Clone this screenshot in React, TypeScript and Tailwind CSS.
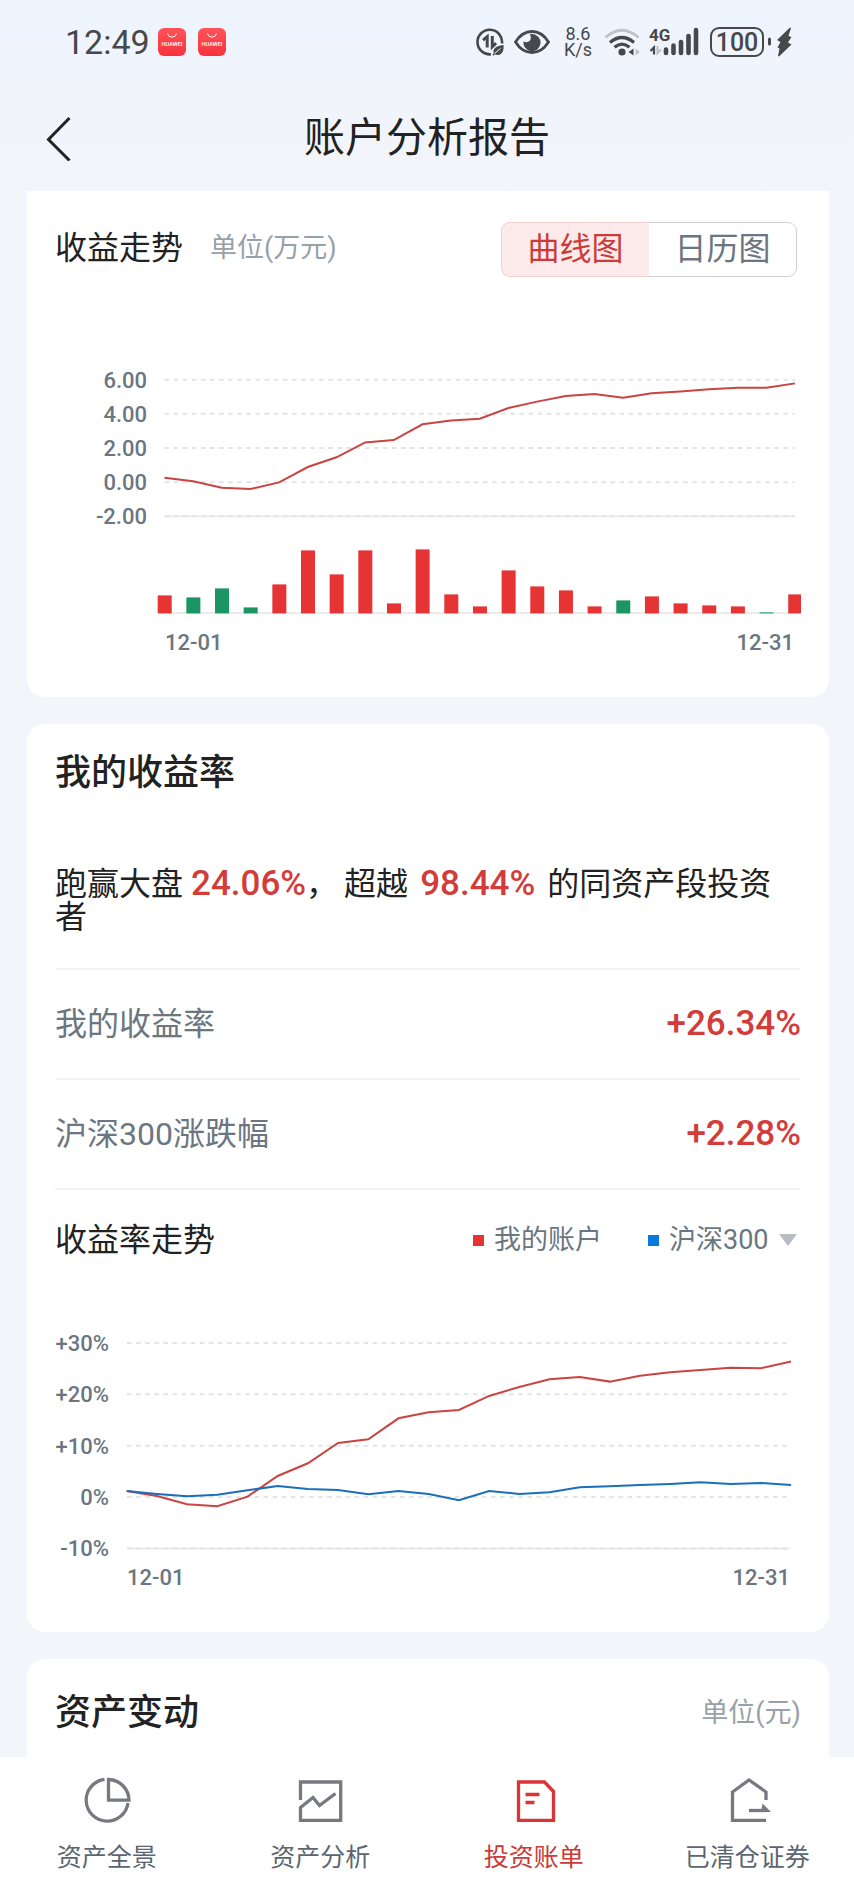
import { useState } from 'react';

const profit = [
  0.26, 0.05, -0.32, -0.4, -0.01, 0.89, 1.46, 2.33, 2.47, 3.39, 3.62, 3.72,
  4.35, 4.72, 5.05, 5.17, 4.95, 5.21, 5.32, 5.44, 5.54, 5.54, 5.79,
];

// daily bars, negative = loss
const daily = [
  18, -16, -25, -6, 29, 63, 39, 63, 10, 64, 19, 7, 43, 27, 23, 7, -13, 17, 10,
  8, 7, -1, 19,
];

const accountRate = [
  1.13, 0.16, -1.46, -1.85, 0.03, 4.05, 6.52, 10.47, 11.19, 15.27, 16.44,
  16.89, 19.62, 21.37, 22.86, 23.31, 22.41, 23.57, 24.22, 24.68, 25.13, 25,
  26.34,
];

const indexRate = [
  1.13, 0.55, 0.1, 0.42, 1.26, 2.11, 1.52, 1.33, 0.49, 1.13, 0.55, -0.68, 1.13,
  0.55, 0.88, 1.85, 2.04, 2.3, 2.5, 2.82, 2.5, 2.69, 2.28,
];

const toPoints = (data: number[], left: number, step: number, zero: number, unit: number) =>
  data.map((v, i) => `${left + i * step},${zero - v * unit}`).join(' ');

type GridProps = {
  labels: string[];
  left: number;
  right: number;
  labelRight: number;
  top: number;
  step: number;
};

const Grid = ({ labels, left, right, labelRight, top, step }: GridProps) => (
  <g>
    {labels.map((label, i) => {
      const y = top + i * step;
      const last = i === labels.length - 1;
      return (
        <g key={label}>
          {last && <line x1={left} x2={right} y1={y} y2={y} stroke="#ececec" strokeWidth="2" />}
          <line
            x1={left}
            x2={right}
            y1={y}
            y2={y}
            stroke="#e4e4e4"
            strokeWidth="2"
            strokeDasharray="4.55 4.55"
          />
          <text x={labelRight} y={y + 8} textAnchor="end">
            {label}
          </text>
        </g>
      );
    })}
  </g>
);

const chartText = 'block w-full h-auto fill-[#6b7680] text-[22px] font-medium';

const ProfitChart = () => (
  <svg viewBox="0 0 746 392" className={chartText} role="img" aria-label="收益走势">
    <Grid
      labels={['6.00', '4.00', '2.00', '0.00', '-2.00']}
      left={109.5}
      right={740}
      labelRight={92}
      top={102.7}
      step={34.15}
    />
    <line x1="104" x2="746" y1="336" y2="336" stroke="#ebebeb" strokeWidth="2" />
    {daily.map((v, i) => (
      <rect
        key={i}
        x={102.7 + i * 28.66}
        y={336.4 - Math.abs(v)}
        width="14"
        height={Math.abs(v)}
        fill={v > 0 ? '#e63434' : '#1a9664'}
      />
    ))}
    <polyline
      points={toPoints(profit, 109.5, 28.66, 205.2, 17.07)}
      fill="none"
      stroke="#c94442"
      strokeWidth="2"
    />
    <text x="110" y="373">12-01</text>
    <text x="739" y="373" textAnchor="end">12-31</text>
  </svg>
);

const RateChart = () => (
  <svg viewBox="0 0 746 314" className={chartText} role="img" aria-label="收益率走势">
    <Grid
      labels={['+30%', '+20%', '+10%', '0%', '-10%']}
      left={72}
      right={735}
      labelRight={54}
      top={53}
      step={51.35}
    />
    <polyline
      points={toPoints(accountRate, 71.7, 30.2, 206.8, 5.14)}
      fill="none"
      stroke="#c94442"
      strokeWidth="2"
    />
    <polyline
      points={toPoints(indexRate, 71.7, 30.2, 206.8, 5.14)}
      fill="none"
      stroke="#1b6fba"
      strokeWidth="2"
    />
    <text x="72" y="295">12-01</text>
    <text x="735" y="295" textAnchor="end">12-31</text>
  </svg>
);

const AppBadge = () => (
  <svg width="28" height="28" viewBox="0 0 28 28">
    <defs>
      <linearGradient id="badge" x1="0" y1="0" x2="0" y2="1">
        <stop offset="0" stopColor="#ff5358" />
        <stop offset="1" stopColor="#f5333f" />
      </linearGradient>
    </defs>
    <rect width="28" height="28" rx="6" fill="url(#badge)" />
    <path d="M9.5 5.5a4.6 4.6 0 0 0 9 0" fill="none" stroke="#fff" strokeWidth="1" />
    <text x="14" y="18" textAnchor="middle" fontSize="5.6" fontWeight="500" fill="#fff">
      HUAWEI
    </text>
  </svg>
);

const StatusBar = () => (
  <div className="flex h-[84px] shrink-0 items-center justify-between pl-[65px] pr-[60px] text-[#47484b]">
    <div className="flex items-center">
      <span className="w-[93px] text-[34px] leading-10">12:49</span>
      <div className="flex gap-3">
        <AppBadge />
        <AppBadge />
      </div>
    </div>
    <div className="flex items-center">
      {/* data saver */}
      <svg width="28" height="28" viewBox="0 0 28 28" fill="none" stroke="currentColor">
        <path d="M26 15.5A12.3 12.3 0 1 0 15 26.3" strokeWidth="2.6" />
        <path d="M7 12.2l4.200-3.500V19.500M16.300 8v10.800l3.800-3.600" strokeWidth="3" />
        <path
          d="M27.5 17c.6 6-1.5 10-6 10-1.2 0-2-.3-2.6-.8l-1.4 1.5-1-1 1.3-1.6c-1.7-4.5 3-7.6 9.7-8.1z"
          fill="currentColor"
          stroke="none"
        />
        <path d="M18.5 25.5l6-5" stroke="#f0f5fd" strokeWidth="1" />
      </svg>
      {/* eye comfort */}
      <svg className="ml-[10px]" width="36" height="26" viewBox="0 0 36 26">
        <path
          d="M1.5 13C6 5.8 11.5 2.5 18 2.5S30 5.800 34.500 13C30 20.200 24.500 23.500 18 23.500S6 20.200 1.500 13z"
          fill="none"
          stroke="currentColor"
          strokeWidth="2.8"
        />
        <path
          d="M18 5a8.600 8.600 0 1 1-8.500 7.200c2 1.600 5.500 1.200 6.800-1.200 1-2 .6-4.300-.6-5.700A9 9 0 0 1 18 5z"
          fill="currentColor"
        />
      </svg>
      <span className="ml-3 flex w-8 flex-col items-center text-[18px] leading-4">
        <span>8.6</span>
        <span>K/s</span>
      </span>
      {/* wifi */}
      <svg className="ml-[10px]" width="37" height="28" viewBox="0 0 37 28" fill="none" stroke="currentColor">
        <path d="M1.5 9.5Q18 -5 34.5 9.5" stroke="#bfc3c9" strokeWidth="2.8" />
        <path d="M6 14.5q12-10 24 0" strokeWidth="3.2" />
        <path d="M10.5 19.3q7.5-6.5 15 0" strokeWidth="3.2" />
        <circle cx="18" cy="24" r="3.6" fill="currentColor" stroke="none" />
        <path d="M29.5 20.5v7l-5-3.5z" fill="currentColor" stroke="none" />
        <path d="M31.5 20.5v7l4.500-3.500z" fill="#bfc3c9" stroke="none" />
      </svg>
      {/* mobile signal */}
      <svg
        className="ml-2 overflow-visible"
        width="52"
        height="30"
        viewBox="0 0 52 30"
        fill="none"
        stroke="currentColor"
      >
        <text x="0" y="14" fontSize="17" fontWeight="700" fill="currentColor" stroke="none">
          4G
        </text>
        <path d="M5 27.500v-7l-3.500 3.500" strokeWidth="2.2" />
        <path d="M8.500 19v7l3.500-3.500" stroke="#bfc3c9" strokeWidth="2.2" />
        <path
          d="M17 22.500v3.500M24.500 18.500v7.500M32 15v11M39.500 9v17M47 3v23"
          strokeWidth="4.6"
          strokeLinecap="round"
        />
      </svg>
      <div className="ml-[9px] flex h-[30px] w-[54px] items-center justify-center rounded-[9px] border-2 border-current text-[25px] font-medium leading-none">
        100
      </div>
      {/* battery tip and charging bolt */}
      <svg className="ml-1" width="26" height="30" viewBox="0 0 26 30" fill="currentColor">
        <rect x="0" y="10.5" width="3" height="8" rx="1.5" />
        <path d="M22 .5L9 13l3.500 2-3 5.500 2 1L10 29l1 .5L23.500 17.500l-3.500-2 3.500-5.500-3-1L23 1z" />
      </svg>
    </div>
  </div>
);

const tabs = [
  {
    label: '资产全景',
    icon: (
      <>
        <path d="M21.5 3.300A21 21 0 1 0 45 27" />
        <path d="M25.5 3.5v20.700h20.500A21 21 0 0 0 25.500 3.500z" />
      </>
    ),
  },
  {
    label: '资产分析',
    icon: <path d="M4.5 24V6h40.200v38.300H4.500V31.500L17 21.500l6.500 8L39.500 17.500" />,
  },
  {
    label: '投资账单',
    icon: (
      <>
        <path d="M8.5 6h26l9 9.500v28.800h-35z" />
        <path d="M15.500 18.500h14M15.500 26.500h9" />
      </>
    ),
  },
  {
    label: '已清仓证券',
    icon: (
      <>
        <path d="M43 24v-8L26 4 9.500 16v28.300H43" />
        <path d="M26 34.500h18" />
        <path d="M39.500 27.500l8.500 8.500H38z" fill="currentColor" stroke="none" />
      </>
    ),
  },
];

const TabBar = () => (
  <nav className="grid h-[133px] shrink-0 grid-cols-4 bg-white">
    {tabs.map((tab) => {
      const active = tab.label === '投资账单';
      return (
        <a
          key={tab.label}
          href="#"
          aria-current={active ? 'page' : undefined}
          className={`flex flex-col items-center pt-[19px] ${active ? 'text-[#dd3535]' : 'text-[#777881]'}`}
        >
          <svg width="48" height="48" viewBox="0 0 48 48" fill="none" stroke="currentColor" strokeWidth="3.3">
            {tab.icon}
          </svg>
          <span
            className={`mt-[18px] text-[25px] leading-8 ${active ? 'text-[#c93a38]' : 'text-[#5b6670]'}`}
          >
            {tab.label}
          </span>
        </a>
      );
    })}
  </nav>
);

const App = () => {
  const [view, setView] = useState('曲线图');

  return (
    <div className="flex h-screen flex-col bg-[#f4f5fa] bg-[linear-gradient(#edf5fe,#f1f4fc_80px,#f4f5fa_190px)] font-[Roboto,'Noto_Sans_CJK_SC',sans-serif] text-[#222]">
      <StatusBar />

      <header className="grid h-[107px] shrink-0 grid-cols-[1fr_auto_1fr] items-center px-11">
        <button type="button" aria-label="返回" className="justify-self-start">
          <svg width="28" height="46" viewBox="0 0 28 46" fill="none" stroke="#222" strokeWidth="3">
            <path d="M25.5 3l-21 21.500 21 21" />
          </svg>
        </button>
        <h1 className="text-[41px] leading-[60px]">账户分析报告</h1>
      </header>

      <main className="flex min-h-0 flex-1 flex-col gap-[27px] overflow-y-auto pl-[27px] pr-[25px] [scrollbar-width:none]">
        <section className="shrink-0 rounded-b-[18px] bg-white px-7 pb-7 pt-[31px]">
          <div className="flex h-[55px] items-center justify-between pr-1">
            <div className="flex items-center pb-1">
              <h2 className="text-[32px] leading-10">收益走势</h2>
              <span className="ml-[27px] text-[27px] leading-10 text-[#98a0a8]">单位(万元)</span>
            </div>
            <div className="flex h-full w-[296px] text-[32px] leading-10">
              {['曲线图', '日历图'].map((name) => (
                <button
                  key={name}
                  type="button"
                  aria-pressed={view === name}
                  onClick={() => setView(name)}
                  className={`flex flex-1 items-center justify-center border pb-0.5 first:rounded-l-[9px] first:border-r-0 last:rounded-r-[9px] last:border-l-0 ${
                    view === name
                      ? 'border-[#f0d0d0] bg-[#fdebeb] text-[#cc3b39]'
                      : 'border-[#cfd2d5] text-[#6b7680]'
                  }`}
                >
                  {name}
                </button>
              ))}
            </div>
          </div>
          <ProfitChart />
        </section>

        <section className="shrink-0 rounded-[18px] bg-white px-7 pb-7 pt-[31px]">
          <h2 className="text-[36px] font-medium leading-9">我的收益率</h2>
          <p className="mb-[34px] mt-[77px] text-[32px] leading-[33px]">
            跑赢大盘
            <b className="ml-2 text-[35px] font-medium leading-7 text-[#d23c3a]">24.06%</b>
            ，<span className="mx-1.5">超越</span>
            <b className="mx-1.5 text-[35px] font-medium leading-7 text-[#d23c3a]">98.44%</b>
            <span className="ml-1.5">的同资产段投资者</span>
          </p>
          <dl>
            {[
              ['我的收益率', '+26.34%'],
              ['沪深300涨跌幅', '+2.28%'],
            ].map(([name, value]) => (
              <div
                key={name}
                className="flex h-[110px] items-center justify-between border-t-2 border-[#f2f2f2]"
              >
                <dt className="text-[32px] leading-10 text-[#6b7680]">{name}</dt>
                <dd className="text-[35px] font-medium leading-10 text-[#d23c3a]">{value}</dd>
              </div>
            ))}
          </dl>
          <div className="flex h-[102px] items-center justify-between border-t-2 border-[#f2f2f2] pr-1">
            <h3 className="text-[32px] leading-10">收益率走势</h3>
            <div className="flex items-center text-[27px] leading-10 text-[#6b7680]">
              <i className="mr-[10px] size-[11px] bg-[#e63434]" />
              我的账户
              <i className="ml-[46px] mr-[10px] size-[11px] bg-[#0a78dc]" />
              <select aria-label="对比指数" className="appearance-none bg-transparent">
                <option>沪深300</option>
              </select>
              <svg className="ml-[10px]" width="18" height="12" viewBox="0 0 18 12">
                <path d="M0 0h18L9 12z" fill="#b7bdc2" />
              </svg>
            </div>
          </div>
          <RateChart />
        </section>

        <section className="h-[300px] shrink-0 rounded-t-[18px] bg-white px-7 pt-[31px]">
          <div className="flex h-[46px] items-center justify-between">
            <h2 className="text-[36px] font-medium leading-9">资产变动</h2>
            <span className="text-[27px] leading-10 text-[#98a0a8]">单位(元)</span>
          </div>
        </section>
      </main>

      <TabBar />
    </div>
  );
};

export default App;
